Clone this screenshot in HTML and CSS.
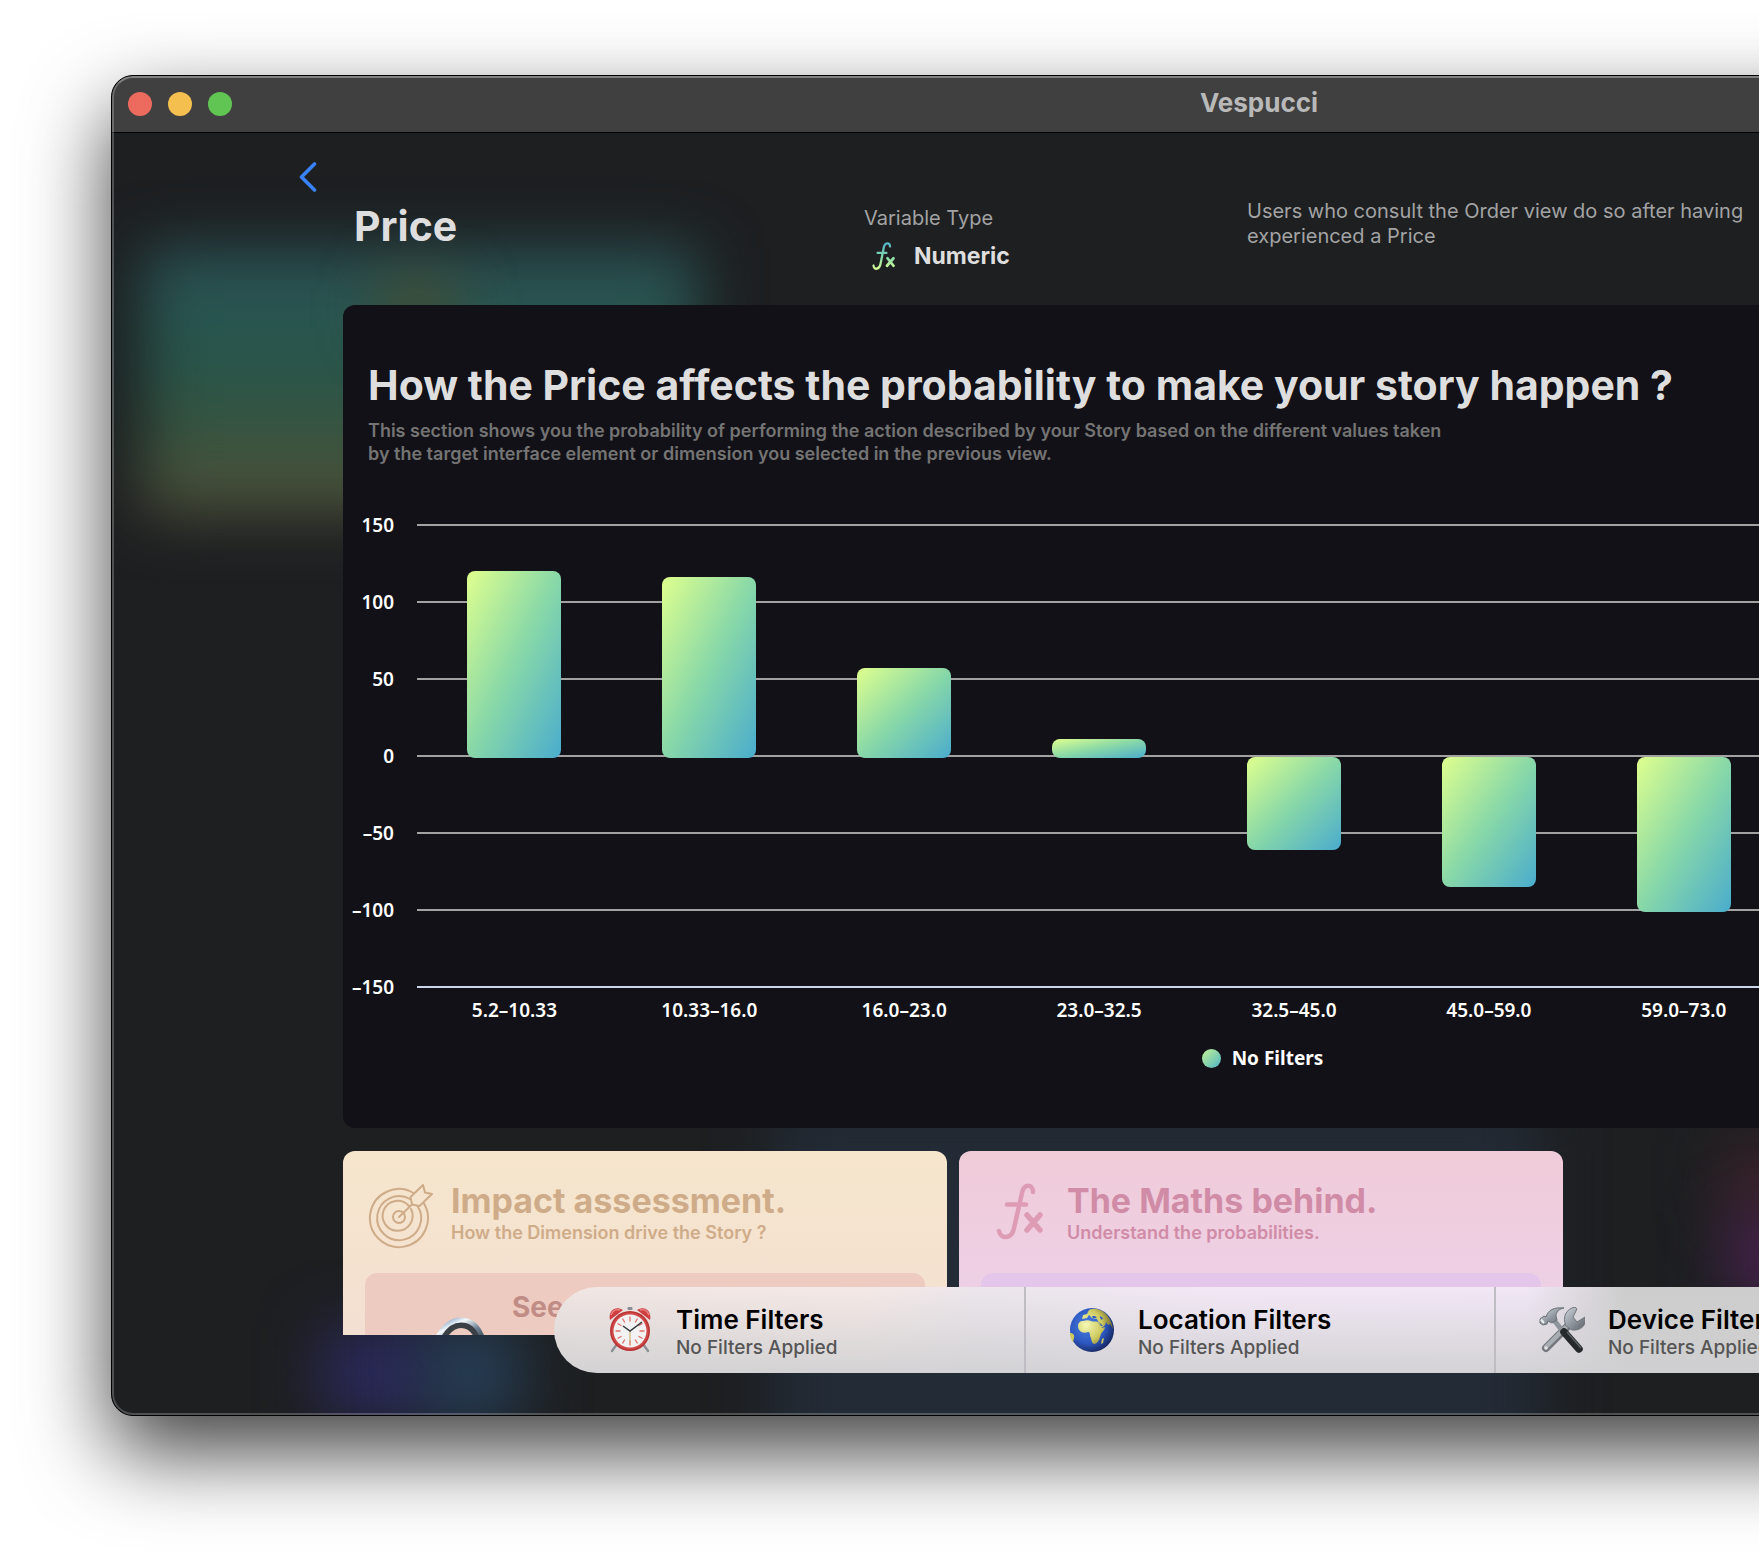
FILE: index.html
```html
<!DOCTYPE html>
<html lang="en">
<head>
<meta charset="utf-8">
<meta name="viewport" content="width=device-width, initial-scale=1">
<title>Vespucci</title>
<link rel="stylesheet" href="styles.css">
</head>
<body>
<div class="desktop">
  <div class="window">
    <header class="titlebar">
      <div class="lights">
        <button class="light light-close" type="button" aria-label="Close"></button>
        <button class="light light-min" type="button" aria-label="Minimize"></button>
        <button class="light light-zoom" type="button" aria-label="Zoom"></button>
      </div>
      <h1 class="app-name">Vespucci</h1>
    </header>

    <main class="content">
      <div class="glow glow-teal" aria-hidden="true"></div>
      <div class="glow glow-amber" aria-hidden="true"></div>
      <div class="glow glow-indigo" aria-hidden="true"></div>
      <div class="glow glow-ocean" aria-hidden="true"></div>
      <div class="glow glow-slate" aria-hidden="true"></div>
      <div class="glow glow-maroon" aria-hidden="true"></div>
      <div class="glow glow-purple" aria-hidden="true"></div>

      <section class="intro">
        <button class="back" type="button" aria-label="Back">
          <svg width="18" height="30" viewBox="0 0 18 30"><path d="M15.500 2 2.500 15l13 13" fill="none" stroke="#3a82f7" stroke-width="3.600" stroke-linecap="round" stroke-linejoin="round"/></svg>
        </button>
        <h2 class="page-title">Price</h2>
        <div class="type">
          <p class="type-label">Variable Type</p>
          <p class="type-value">
            <svg width="26" height="28" viewBox="0 0 46 56">
              <defs><linearGradient id="fx" x1="0" y1="0" x2="0" y2="56" gradientUnits="userSpaceOnUse"><stop offset="0" stop-color="#4fb0c9"/><stop offset=".5" stop-color="#7fd6ad"/><stop offset="1" stop-color="#dcff91"/></linearGradient></defs>
              <g fill="none" stroke="url(#fx)" stroke-width="4.500" stroke-linecap="round" stroke-linejoin="round"><path d="M35 9C35 1 26 0 23 9L16 44C14 55 3 57 2 47M10 21.500H28"/><path d="M30 32.500 42 47.500M42 32.500 29 47.500" stroke-width="5.500"/></g>
            </svg>
            <span>Numeric</span>
          </p>
        </div>
        <p class="summary">Users who consult the Order view do so after having<br>experienced a Price</p>
      </section>

      <section class="panel">
        <h2 class="panel-title">How the Price affects the probability to make your story happen ?</h2>
        <p class="panel-text">This section shows you the probability of performing the action described by your Story based on the different values taken<br>by the target interface element or dimension you selected in the previous view.</p>
        <div class="chart">
          <ul class="y-axis">
            <li>150</li><li>100</li><li>50</li><li>0</li><li>–50</li><li>–100</li><li>–150</li>
          </ul>
          <div class="plot">
            <div class="bars">
              <div class="bar" style="height:187px;margin-top:47px"></div>
              <div class="bar" style="height:181px;margin-top:53px"></div>
              <div class="bar" style="height:90px;margin-top:144px"></div>
              <div class="bar" style="height:19px;margin-top:215px"></div>
              <div class="bar" style="height:93px;margin-top:233px"></div>
              <div class="bar" style="height:130px;margin-top:233px"></div>
              <div class="bar" style="height:155px;margin-top:233px"></div>
            </div>
            <ul class="x-axis">
              <li>5.2–10.33</li><li>10.33–16.0</li><li>16.0–23.0</li><li>23.0–32.5</li><li>32.5–45.0</li><li>45.0–59.0</li><li>59.0–73.0</li>
            </ul>
          </div>
        </div>
        <p class="legend"><span class="legend-dot"></span>No Filters</p>
      </section>

      <section class="cards">
        <article class="card card-impact">
          <div class="card-head">
            <svg class="card-icon" width="66" height="66" viewBox="0 0 66 66"><g fill="none" stroke="#cfac89" stroke-width="2" stroke-linejoin="round" stroke-linecap="round"><path d="M45.500 10A29 29 0 1 0 56 20.500"/><path d="M42 16A22 22 0 1 0 49.500 23"/><path d="M41 23A15 15 0 1 0 43 26"/><circle cx="31" cy="34" r="6"/><path d="M31 34 44 21.500M44 21.500 42.500 14 55 2 57 9.500 64 11 51.500 23Z"/></g></svg>
            <div>
              <h3 class="card-title">Impact assessment.</h3>
              <p class="card-text">How the Dimension drive the Story ?</p>
            </div>
          </div>
          <div class="card-box">
            <svg class="lock" width="54" height="60" viewBox="0 0 54 60"><defs><linearGradient id="steel" x1="0" y1="0" x2="1" y2="1"><stop offset="0" stop-color="#5a7ea8"/><stop offset=".3" stop-color="#f4f9fd"/><stop offset=".6" stop-color="#6c7f92"/><stop offset="1" stop-color="#2c3338"/></linearGradient></defs><path d="M5 27C11 14 18 7 27 7c10 0 17 8 20 22" fill="none" stroke="#3a4046" stroke-width="8"/><path d="M2 24C8 11 17 3 27 3c12 0 20 9 23 24" fill="none" stroke="url(#steel)" stroke-width="5"/></svg>
            <p class="box-title">See</p>
          </div>
        </article>
        <article class="card card-maths">
          <div class="card-head">
            <svg class="card-icon" width="66" height="66" viewBox="0 0 66 66"><g transform="translate(13 1)" fill="none" stroke="#de9cb4" stroke-width="4.500" stroke-linecap="round" stroke-linejoin="round"><path d="M36 8C36 0 27-1 25 9L17 44C15 55 4 56 2 47M10 20.500H29"/><path d="M30 31 43 46M43 31 30 46" stroke-width="5.500"/></g></svg>
            <div>
              <h3 class="card-title">The Maths behind.</h3>
              <p class="card-text">Understand the probabilities.</p>
            </div>
          </div>
          <div class="card-box"></div>
        </article>
      </section>

      <nav class="filters" aria-label="Filters">
        <button class="filter" type="button">
          <svg width="46" height="46" viewBox="0 0 46 46">
            <path d="M10 37 5 44M36 37l5 7" stroke="#8b9097" stroke-width="2.400" stroke-linecap="round"/>
            <path d="M3 13C1 4 8-2 16 3ZM43 13C45 4 38-2 30 3Z" fill="#cf3f41"/><path d="M4 8C6 3 10 2 13 3M42 8C40 3 36 2 33 3" fill="none" stroke="#ee8585" stroke-width="1.500"/>
            <rect x="20.500" y="0" width="5" height="3" rx="1" fill="#888d94"/>
            <circle cx="23" cy="24" r="20" fill="#b93334"/><circle cx="23" cy="24" r="18.500" fill="#d04a49"/><circle cx="23" cy="24" r="16.500" fill="#f1f2f1"/>
            <path d="M23 9.500v5M23 33.500v5M8.500 24h5M32.500 24h5M15.500 11.500l2.300 4M30.500 11.500l-2.300 4M10.500 16.500l4 2.300M35.500 16.500l-4 2.300M10.500 31.500l4-2.300M35.500 31.500l-4-2.300M15.500 36.500l2.300-4M30.500 36.500l-2.300-4" stroke="#e2706b" stroke-width="1.300"/>
            <path d="M23 24v12" stroke="#c9a75e" stroke-width="1"/><path d="M16 19l7 5 12-9" fill="none" stroke="#34383c" stroke-width="1.500"/>
          </svg>
          <span class="filter-copy"><span class="filter-name">Time Filters</span><span class="filter-state">No Filters Applied</span></span>
        </button>
        <button class="filter" type="button">
          <svg width="46" height="46" viewBox="0 0 46 46">
            <defs><radialGradient id="sea" cx=".4" cy=".4" r=".62"><stop offset="0" stop-color="#4a80e4"/><stop offset=".65" stop-color="#2c57bf"/><stop offset="1" stop-color="#182a68"/></radialGradient><radialGradient id="land" gradientUnits="userSpaceOnUse" cx="17" cy="18" r="27"><stop offset="0" stop-color="#f4f8b4"/><stop offset=".6" stop-color="#cdc95e"/><stop offset="1" stop-color="#6a6430"/></radialGradient></defs>
            <circle cx="23" cy="23" r="22" fill="url(#sea)"/>
            <path d="M9 19C9 16 11 14 14 14c3-1 6-1 8 0 2 1 5 0 7 1 1 2 2 4 4 6 1 0 2-1 3-1 0 3-3 5-4 7-1 4-3 10-7 10-3-1-2-5-4-8 0-2 0-4-2-4-3 1-6 1-8-1-1-1-2-3-2-5Z" fill="url(#land)"/>
            <path d="M13 12 14 8 18 7 20 3C26 0 33 3 37 7c3 3 6 8 7 15l-3-5-2 1-2-3c0 3-3 5-5 6l-4-9-5-1-3-3-2 3Z" fill="url(#land)"/>
            <path d="M23 9h3l2 2-4 0ZM31 9l3 2-1 2-2-2ZM30 15l4 4-2 0Z" fill="#2f5cc4"/>
            <path d="M1 26c3 0 5 2 4 5l-1 4C2 33 1 30 1 26ZM33 32l2-1-1 5-2 1Z" fill="#cdc95e"/>
          </svg>
          <span class="filter-copy"><span class="filter-name">Location Filters</span><span class="filter-state">No Filters Applied</span></span>
        </button>
        <button class="filter" type="button">
          <svg width="46" height="46" viewBox="0 0 46 46">
            <defs><linearGradient id="metal" x1="0" y1="0" x2="1" y2="1"><stop offset="0" stop-color="#d3d8dd"/><stop offset=".5" stop-color="#9399a2"/><stop offset="1" stop-color="#5d6269"/></linearGradient></defs>
            <path d="M7 41 31 17" stroke="#73767d" stroke-width="8" stroke-linecap="round"/><path d="M7 40 31 16" stroke="#a9adb4" stroke-width="4.500" stroke-linecap="round"/>
            <path d="M27 19C23 10 27 2 36 0l2 2-4 8 4 5 8-5c2 8-4 14-13 13Z" fill="url(#metal)" stroke="#73777e" stroke-width="1"/><circle cx="7" cy="41" r="1.800" fill="#e2e2e4"/>
            <path d="M15 13 25 26" stroke="#8e949b" stroke-width="5"/><path d="M25 25 40 42" stroke="#26292c" stroke-width="7.500" stroke-linecap="round"/><path d="M28 25 42 41" stroke="#5c6063" stroke-width="1.500"/>
            <path d="M1 12 5 9 7 10C9 3 15 0 25 1c-5 1-8 4-8 8l1 4-5 3-4-2-1 3-4 1-3-2Z" fill="url(#metal)" stroke="#6a7078" stroke-width="1"/><path d="M2 12.500 5 16" stroke="#eef1f4" stroke-width="2"/>
          </svg>
          <span class="filter-copy"><span class="filter-name">Device Filters</span><span class="filter-state">No Filters Applied</span></span>
        </button>
      </nav>
    </main>
  </div>
</div>
</body>
</html>
```
FILE: styles.css
```css
* { box-sizing: border-box; }

body {
  margin: 0;
  background: #fff;
  font-family: Inter, "Liberation Sans", sans-serif;
}

h1, h2, h3, p, ul { margin: 0; padding: 0; }
ul { list-style: none; }
button { border: 0; padding: 0; background: none; font: inherit; color: inherit; text-align: left; }
svg { display: block; flex: none; }

/* The window runs past the right edge of the desktop. */
.desktop {
  min-height: 100vh;
  padding: 75px 0 147px 111px;
  overflow: hidden;
}

.window {
  position: relative;
  margin-right: -648px;
  border: 1px solid #000;
  border-radius: 22px;
  background: #1d1f21;
  box-shadow: 0 36px 84px rgba(0, 0, 0, .75);
  overflow: hidden;
}
.window::after {
  content: "";
  position: absolute;
  inset: 0;
  border: 2px solid rgba(255, 255, 255, .22);
  border-top-color: rgba(255, 255, 255, .35);
  border-radius: 21px;
  pointer-events: none;
}

.titlebar {
  display: grid;
  grid-template-columns: 1fr auto 1fr;
  align-items: center;
  height: 57px;
  padding: 0 16px;
  background: #404040;
  border-bottom: 1px solid #000;
}
.lights { display: flex; gap: 16px; }
.light { width: 24px; height: 24px; border-radius: 50%; }
.light-close { background: #ed6a5e; }
.light-min { background: #f5bf4f; }
.light-zoom { background: #61c554; }
.app-name { padding-bottom: 2px; font-size: 26px; line-height: 32px; font-weight: 700; color: #b9b9b9; }

.content {
  position: relative;
  padding: 0 231px 80px 0;
  overflow: hidden;
}

/* Blurred colours behind the content */
.glow { position: absolute; filter: blur(30px); }
.glow-teal { left: 30px; top: 116px; width: 556px; height: 264px; background: linear-gradient(#2b5256, #27564c 40%, #35533f 68%, #55543a); }
.glow-amber { left: 270px; top: 150px; width: 70px; height: 50px; background: #4a4a2a; }
.glow-indigo { left: 210px; top: 1195px; width: 120px; height: 90px; background: #2b295c; }
.glow-ocean { left: 310px; top: 1190px; width: 100px; height: 100px; background: #263d54; }
.glow-slate { left: 660px; top: 970px; width: 770px; height: 380px; background: #232b36; }
.glow-maroon { left: 1610px; top: 1010px; width: 200px; height: 80px; background: #3a2229; }
.glow-purple { left: 1615px; top: 1080px; width: 200px; height: 90px; background: #46224c; }

.intro {
  position: relative;
  display: grid;
  grid-template-columns: 231px 521px 383px 1fr;
  align-items: start;
  height: 172px;
}
.back { justify-self: end; margin: 29px 26px 0 0; }
.page-title { padding: 68px 0 0 11px; font-size: 41px; line-height: 50px; font-weight: 700; color: #dedede; }
.type { padding-top: 73px; color: #a3a3a4; }
.type-label { font-size: 20px; line-height: 24px; }
.type-value { display: flex; align-items: center; gap: 17px; padding: 12px 0 0 7px; font-size: 23px; line-height: 28px; font-weight: 700; color: #dedede; }
.summary { padding-top: 66px; font-size: 20px; line-height: 25px; color: #a3a3a4; }

.panel {
  position: relative;
  margin-left: 231px;
  padding: 55px 4px 58px 0;
  border-radius: 12px;
  background: #121117;
}
.panel-title { padding-left: 25px; font-size: 41px; line-height: 50px; font-weight: 700; color: #dedede; }
.panel-text { padding: 9px 0 0 25px; font-size: 18px; line-height: 23px; font-weight: 600; color: #747474; }

.chart {
  display: grid;
  grid-template-columns: 51px 1fr;
  gap: 23px;
  margin-top: 59px;
  font-family: "Noto Sans", sans-serif;
  font-size: 19px;
  line-height: 24px;
  font-weight: 600;
  color: #fff;
}
.y-axis { display: flex; flex-direction: column; gap: 53px; margin-top: -11px; white-space: nowrap; }
.y-axis li { display: flex; justify-content: flex-end; }
.bars, .x-axis { display: grid; grid-template-columns: repeat(9, 1fr); }
.bars {
  align-items: start;
  height: 464px;
  border-bottom: 2px solid #ccd6eb;
  background: repeating-linear-gradient(#a2a2a2 0 2px, transparent 2px 77px);
}
.bar {
  justify-self: center;
  width: 94px;
  border-radius: 8px;
  background: linear-gradient(to bottom right, #dfff8e, #88d8a8 50%, #4aaccd);
}
.x-axis { margin-top: 10px; text-align: center; }

.legend {
  display: flex;
  justify-content: center;
  align-items: center;
  gap: 11px;
  padding: 24px 0 0 11px;
  font-family: "Noto Sans", sans-serif;
  font-size: 19px;
  line-height: 24px;
  font-weight: 700;
  color: #fff;
}
.legend-dot { width: 19px; height: 19px; border-radius: 50%; background: linear-gradient(to bottom right, #c5f396, #4fb4c4); }

.cards {
  position: relative;
  display: flex;
  gap: 12px;
  height: 184px;
  margin: 23px 0 0 231px;
  overflow: hidden;
}
.card { width: 604px; height: 400px; flex: none; padding: 32px 22px; border-radius: 12px; }
.card-impact { color: #cfac89; background: linear-gradient(#f6e6cc, #f3dfd3 200px); }
.card-maths { color: #d08ca6; background: linear-gradient(#f0cbd8, #edd1e8 160px); }
.card-head { display: flex; gap: 17px; height: 90px; padding-left: 3px; }
.card-title { font-size: 34px; line-height: 36px; font-weight: 700; }
.card-text { font-size: 18px; line-height: 28px; font-weight: 600; }
.card-box { display: flex; gap: 24px; height: 240px; padding: 20px 0 0 69px; border-radius: 12px; }
.card-impact .card-box { background: #eecbc1; color: #c08d86; }
.card-maths .card-box { background: #e4c6ea; }
.lock { margin-top: 24px; }
.box-title { font-size: 28px; line-height: 28px; font-weight: 700; }

/* Floating bar over the lower edge of the page */
.filters {
  position: absolute;
  left: 442px;
  right: 442px;
  bottom: 42px;
  display: grid;
  grid-template-columns: repeat(3, 1fr);
  height: 86px;
  border-radius: 43px;
  background:
    linear-gradient(rgba(208, 208, 210, 0), rgba(208, 208, 210, .9)),
    linear-gradient(to right, #f1e6e3, #f5e9e6 22%, #ece6ec 30%, #f3e8f6 48%, #f1e7f5 69%, #cdcdcd 76%);
}
.filter { display: flex; align-items: center; gap: 23px; padding-left: 53px; }
.filter + .filter { padding-left: 43px; border-left: 2px solid #bfbdc3; }
.filter-copy { display: flex; flex-direction: column; padding-top: 5px; }
.filter-name { font-size: 26px; line-height: 30px; font-weight: 600; color: #000; }
.filter-state { font-size: 19px; line-height: 25px; font-weight: 500; color: #555; }
```
